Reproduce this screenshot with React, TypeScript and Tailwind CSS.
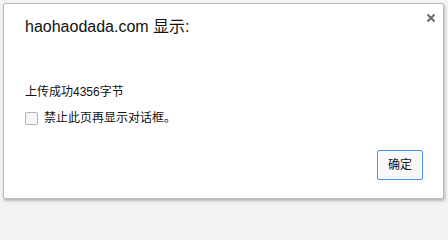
import React from "react";

export default function App() {
  return (
    <div
      className="min-h-screen w-[448px] bg-[#f3f3f3] pt-[3px] pl-[3px]"
      style={{ fontFamily: '"Liberation Sans", "Noto Sans CJK SC", sans-serif' }}
    >
      <div className="relative flex flex-col w-[441px] h-[196px] bg-white border border-[#b9b9b9] rounded-[2px] shadow-[1px_2px_3px_rgba(0,0,0,0.25)] pl-[21px] pr-[20px]">
        {/* close */}
        <button className="absolute top-[9px] right-[7px] w-[10px] h-[10px] flex items-center justify-center">
          <svg width="10" height="10" viewBox="0 0 10 10">
            <path d="M1.5 1.5 L8.5 8.5 M8.5 1.5 L1.5 8.5" stroke="#6b6b6b" strokeWidth="2" />
          </svg>
        </button>

        <h1 className="mt-[13px] text-[16px] leading-[20px] text-[#111]">haohaodada.com 显示:</h1>

        <p className="mt-[47px] text-[12px] leading-[16px] text-[#111]">上传成功4356字节</p>

        <label className="mt-[10px] flex items-center h-[16px] text-[12px] leading-[16px] text-[#111]">
          <span className="w-[13px] h-[13px] border border-[#b3b3b3] rounded-[2px] bg-[#f7f7f7]" />
          <span className="ml-[6px]">禁止此页再显示对话框。</span>
        </label>

        <div className="mt-[24px] flex justify-end">
          <button className="w-[46px] h-[30px] border border-[#4d90fe] rounded-[2px] bg-[#f8f8f8] text-[12px] text-[#111]">
            确定
          </button>
        </div>
      </div>
    </div>
  );
}
